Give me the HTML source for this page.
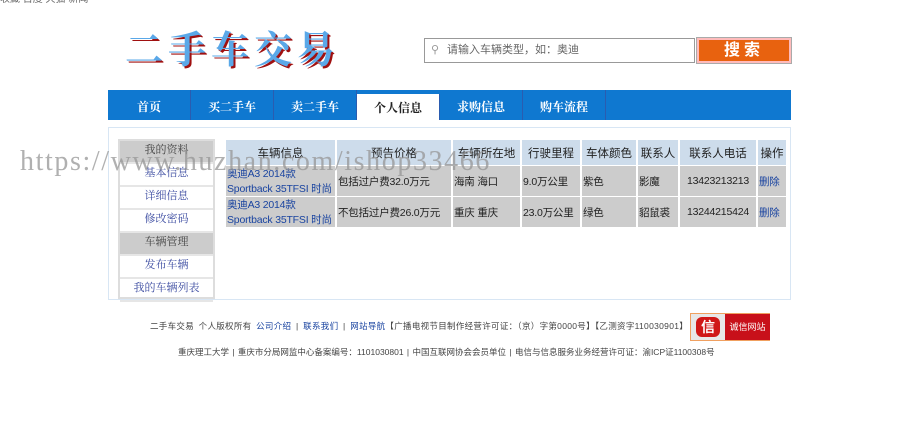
<!DOCTYPE html>
<html><head><meta charset="utf-8"><style>
*{margin:0;padding:0;box-sizing:border-box}
body{width:900px;height:435px;background:#fff;position:relative;overflow:hidden;font-family:"Liberation Sans","Noto Sans CJK SC",sans-serif;font-size:12px;color:#222}
.abs{position:absolute}
.logo{left:125px;top:22px;font-family:"Noto Serif CJK SC","WenQuanYi Zen Hei",serif;font-size:38px;font-weight:bold;color:#5aa8e8;letter-spacing:5px;text-shadow:2px 2px 0 #a01010;line-height:50px}
.search{left:424px;top:38px;width:271px;height:25px;border:1px solid #999;color:#666;font-size:11px;line-height:23px;padding-left:22px}
.btn{left:697px;top:38px;width:94px;height:25px;background:#e8620f;border:2px solid #fbb;outline:1px solid #aaa;color:#fff;font-size:16px;font-weight:bold;text-align:center;line-height:21px;letter-spacing:4px}
.nav{left:108px;top:90px;width:683px;height:30px;background:#0f78d0}
.nav div{position:absolute;top:0;height:30px;width:83px;color:#fff;font-weight:bold;font-size:12px;text-align:center;line-height:34px;border-right:1px solid #2a5cb0;font-family:"Noto Serif CJK SC",serif}
.nav .on{background:#fff;color:#222;top:4px;height:26px;line-height:28px}
.box{left:108px;top:127px;width:683px;height:173px;border:1px solid #d8e6f4}
.side{left:118px;top:139px;width:97px;height:160px;border:2px solid #ddd;background:#fff}
.side div{height:23px;border-bottom:2px solid #e6e6e6;text-align:center;color:#3a4aa0;font-size:11px;line-height:16px;font-family:"Noto Serif CJK SC",serif}
.side .h{background:#ccc;color:#444}
table{position:absolute;left:224px;top:140px;border-collapse:separate;border-spacing:2px 0;font-size:10.5px;table-layout:fixed;width:559px}
td{background:#ccc;height:29px;padding:0 1px;white-space:nowrap;overflow:hidden;border-bottom:1px solid #fff;letter-spacing:-0.2px}
th{background:#cddceb;font-weight:normal;height:26px;font-size:11.5px;border-bottom:1px solid #fff;white-space:nowrap;overflow:hidden}
a{color:#1a44a0;text-decoration:none}
.wm{left:20px;top:146px;font-family:"Liberation Serif",serif;font-size:28px;color:rgba(150,150,150,.75);letter-spacing:1.6px}
.f1{left:150px;top:320px;font-size:8.5px;color:#444;letter-spacing:0.3px;word-spacing:2px;white-space:nowrap}
.f2{left:178px;top:346px;font-size:8.5px;color:#444;letter-spacing:0;word-spacing:1px;white-space:nowrap}
.badge{left:690px;top:313px;width:80px;height:28px;border:1px solid #f0a060;background:#fff}
</style></head><body>
<div class="abs" style="left:0;top:0;width:900px;height:6px;overflow:hidden;font-size:10px;color:#666;line-height:0">收藏 百度 天猫 新闻</div>
<div class="abs logo">二手车交易</div>
<div class="abs search"><span style="position:absolute;left:6px;top:0;color:#999">&#9906;</span>请输入车辆类型，如：奥迪</div>
<div class="abs btn">搜索</div>
<div class="abs nav">
<div style="left:0">首页</div><div style="left:83px">买二手车</div><div style="left:166px">卖二手车</div><div class="on" style="left:249px">个人信息</div><div style="left:332px">求购信息</div><div style="left:415px">购车流程</div>
</div>
<div class="abs box"></div>
<div class="abs side">
<div class="h">我的资料</div><div>基本信息</div><div>详细信息</div><div>修改密码</div><div class="h">车辆管理</div><div>发布车辆</div><div>我的车辆列表</div>
</div>
<table>
<colgroup><col style="width:109px"><col style="width:114px"><col style="width:67px"><col style="width:58px"><col style="width:54px"><col style="width:40px"><col style="width:76px"><col style="width:28px"></colgroup>
<tr><th>车辆信息</th><th>预告价格</th><th>车辆所在地</th><th>行驶里程</th><th>车体颜色</th><th>联系人</th><th>联系人电话</th><th>操作</th></tr>
<tr><td><a>奥迪A3 2014款<br>Sportback 35TFSI 时尚</a></td><td>包括过户费32.0万元</td><td>海南 海口</td><td>9.0万公里</td><td>紫色</td><td>影魔</td><td style="text-align:center">13423213213</td><td><a>删除</a></td></tr>
<tr><td><a>奥迪A3 2014款<br>Sportback 35TFSI 时尚</a></td><td>不包括过户费26.0万元</td><td>重庆 重庆</td><td>23.0万公里</td><td>绿色</td><td>貂鼠裘</td><td style="text-align:center">13244215424</td><td><a>删除</a></td></tr>
</table>
<div class="abs wm">https://www.huzhan.com/ishop33466</div>
<div class="abs f1">二手车交易 个人版权所有 <a>公司介绍</a> | <a>联系我们</a> | <a>网站导航</a>【广播电视节目制作经营许可证：（京）字第0000号】【乙测资字110030901】</div>
<div class="abs badge"><div style="position:absolute;left:0;top:0;width:34px;height:26px;background:#e8e8e8"><div style="position:absolute;left:5px;top:3px;width:24px;height:20px;background:#d01818;border-radius:6px;color:#fff;font-weight:bold;text-align:center;line-height:20px;font-size:14px">信</div></div><div style="position:absolute;left:34px;top:0;width:45px;height:26px;background:#c8101a;color:#fff;font-size:9px;line-height:26px;text-align:center">诚信网站</div></div>
<div class="abs f2">重庆理工大学 | 重庆市分局网监中心备案编号：1101030801 | 中国互联网协会会员单位 | 电信与信息服务业务经营许可证：渝ICP证1100308号</div>
</body></html>
